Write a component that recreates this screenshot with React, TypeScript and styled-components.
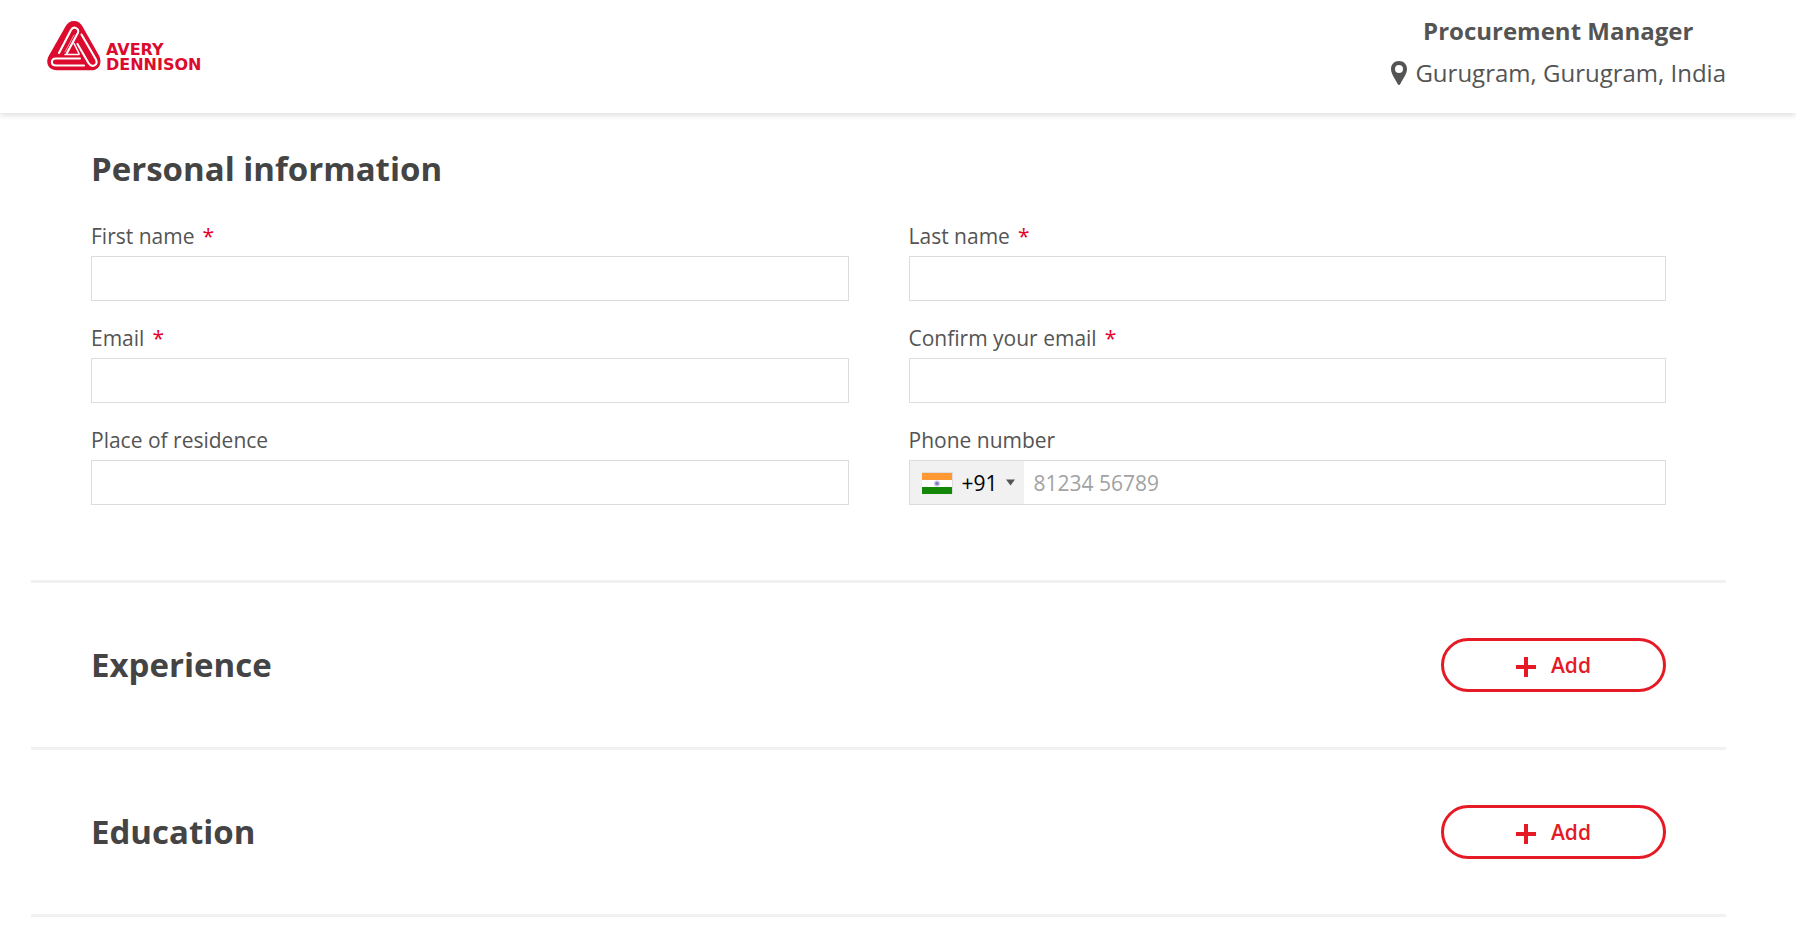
import React, { useId } from "react";
import styled, { createGlobalStyle } from "styled-components";

const GlobalStyle = createGlobalStyle`
  *, *::before, *::after { box-sizing: border-box; }
  body {
    margin: 0;
    background: #fff;
    color: #545454;
    font-family: "Open Sans", "Noto Sans", sans-serif;
    font-size: 21px;
    line-height: 28px;
  }
  button, input, select { font: inherit; }
`;

const Header = styled.header`
  display: flex;
  align-items: flex-start;
  justify-content: space-between;
  height: 113px;
  padding: 10px 70px 0 47px;
  background: #fff;
  box-shadow: 0 3px 5px rgba(0, 0, 0, 0.11);
`;

const LogoLink = styled.a`
  display: flex;
  gap: 5px;
  padding-top: 11px;
  color: #dc0a2d;
  text-decoration: none;
  svg { display: block; }
`;

const Wordmark = styled.span`
  display: flex;
  flex-direction: column;
  padding-top: 21px;
  font-family: "DejaVu Sans", sans-serif;
  font-size: 16px;
  line-height: 15px;
  font-weight: 700;
`;

const JobSummary = styled.div`
  display: flex;
  flex-direction: column;
  align-items: center;
  font-size: 24px;
  line-height: 42px;
`;

const JobTitle = styled.h1`
  margin: 0;
  font-size: inherit;
  font-weight: 700;
`;

const JobLocation = styled.div`
  display: flex;
  align-items: center;
  gap: 7px;
`;

const Main = styled.main`
  margin: 0 70px 0 31px;
`;

const Section = styled.section`
  border-bottom: 3px solid #f1f1f1;
  padding: 32px 60px 75px;
`;

const CollapsedSection = styled(Section)`
  display: flex;
  align-items: center;
  justify-content: space-between;
  padding: 55px 60px;
`;

const SectionTitle = styled.h2`
  margin: 0;
  color: #444;
  font-size: 33px;
  line-height: 48px;
  font-weight: 700;
`;

const FieldGrid = styled.div`
  display: grid;
  grid-template-columns: 1fr 1fr;
  gap: 23px 60px;
  margin-top: 29px;
`;

const FieldLabel = styled.label`
  display: block;
  width: fit-content;
  margin-bottom: 6px;
`;

const Required = styled.span`
  margin-left: 8px;
  color: #e4002b;
`;

const TextInput = styled.input`
  display: block;
  width: 100%;
  height: 45px;
  padding: 0 10px;
  border: 1px solid #dcdcdc;
  border-radius: 0;
  background: #fff;
  color: #222;
  outline: none;
`;

const PhoneBox = styled.div`
  display: flex;
  height: 45px;
  border: 1px solid #dcdcdc;
  background: #fff;
`;

const CountryPicker = styled.div`
  display: flex;
  align-items: center;
  flex: none;
  width: 114px;
  padding: 0 8px 0 12px;
  background: #f1f1f1;
`;

const DialCode = styled.select`
  width: 36px;
  height: 100%;
  margin: 0 8px 0 9px;
  padding: 0;
  border: 0;
  background: transparent;
  color: #000;
  appearance: none;
  outline: none;
`;

const PhoneInput = styled(TextInput)`
  flex: 1;
  min-width: 0;
  height: 100%;
  border: 0;
  &::placeholder { color: #a2a2a2; opacity: 1; }
`;

const AddButton = styled.button`
  display: flex;
  align-items: center;
  justify-content: center;
  gap: 15px;
  width: 225px;
  height: 54px;
  padding: 0;
  border: 3px solid #e51a24;
  border-radius: 27px;
  background: #fff;
  color: #e51a24;
  font-weight: 600;
  cursor: pointer;
`;

const LogoMark = () => (
  <svg width="54" height="50" viewBox="0 0 54 50" aria-hidden="true">
    <path
      d="M27 0C31 0 33.500 2 35.500 5.500L52 34.500C55.500 42 52.500 49.300 44 49.300H10C1.500 49.300 -2 42 1.700 35L18.500 5.500C20.500 2 23 0 27 0Z"
      fill="#dc0a2d"
    />
    <g fill="none" stroke="#fff" strokeWidth="2.100" strokeLinecap="round" strokeLinejoin="round">
      <path d="M12 32L24 9C26.500 4.500 33 7.500 30.800 12L20 32" />
      <path d="M18 31L27 14" strokeWidth="1" strokeOpacity="0.6" />
      <path d="M32 32.500L27 22.500" strokeWidth="1.500" />
      <path d="M33 37.500H9C3.500 37.500 3.500 44.500 9 44.500H37" />
      <path d="M18 33.500H32" strokeWidth="1.500" />
      <path d="M34.500 13.500L49 38.500C51.500 44 45 47.500 41.500 42L30.500 23" />
    </g>
  </svg>
);

const PinIcon = () => (
  <svg width="18" height="24" viewBox="0 0 18 24" aria-hidden="true">
    <path
      fillRule="evenodd"
      fill="#545454"
      d="M9 0C13.700 0 17 3.500 17 8C17 13 12.500 18.500 10.300 23C9.800 24.200 8.200 24.200 7.700 23C5.500 18.500 1 13 1 8C1 3.500 4.300 0 9 0ZM9 4A4 4 0 1 0 9 12A4 4 0 1 0 9 4Z"
    />
  </svg>
);

const IndiaFlag = () => (
  <svg width="31" height="22" viewBox="0 0 31 22" aria-hidden="true">
    <rect width="31" height="22" fill="#ddd" />
    <rect y="1" width="30" height="7" fill="#ff9933" />
    <rect y="8" width="30" height="7" fill="#fff" />
    <rect y="15" width="30" height="7" fill="#138808" />
    <circle cx="15" cy="11.500" r="3" fill="#c9c7ec" />
    <circle cx="15" cy="11.500" r="1.700" fill="#7f7acb" />
  </svg>
);

const Caret = () => (
  <svg width="9" height="7" viewBox="0 0 9 7" aria-hidden="true">
    <path d="M0 0.500H9L4.500 6.500Z" fill="#555" />
  </svg>
);

const PlusIcon = () => (
  <svg width="20" height="24" viewBox="0 0 20 24" aria-hidden="true">
    <path d="M8 4h4v8h8v4h-8v8h-4v-8H0v-4h8z" fill="currentColor" />
  </svg>
);

type FieldProps = { label: string; type?: string; required?: boolean };

const Field = ({ label, type = "text", required }: FieldProps) => {
  const id = useId();
  return (
    <div>
      <FieldLabel htmlFor={id}>
        {label}
        {required && <Required>*</Required>}
      </FieldLabel>
      <TextInput id={id} type={type} required={required} />
    </div>
  );
};

const PhoneField = () => {
  const id = useId();
  return (
    <div>
      <FieldLabel htmlFor={id}>Phone number</FieldLabel>
      <PhoneBox>
        <CountryPicker>
          <IndiaFlag />
          <DialCode aria-label="Country code" defaultValue="+91">
            <option>+91</option>
          </DialCode>
          <Caret />
        </CountryPicker>
        <PhoneInput id={id} type="tel" placeholder="81234 56789" />
      </PhoneBox>
    </div>
  );
};

const ExpandableSection = ({ title }: { title: string }) => (
  <CollapsedSection>
    <SectionTitle>{title}</SectionTitle>
    <AddButton type="button">
      <PlusIcon />
      Add
    </AddButton>
  </CollapsedSection>
);

export default function App() {
  return (
    <>
      <GlobalStyle />
      <Header>
        <LogoLink href="#">
          <LogoMark />
          <Wordmark>
            <span>AVERY</span>
            <span>DENNISON</span>
          </Wordmark>
        </LogoLink>
        <JobSummary>
          <JobTitle>Procurement Manager</JobTitle>
          <JobLocation>
            <PinIcon />
            Gurugram, Gurugram, India
          </JobLocation>
        </JobSummary>
      </Header>
      <Main>
        <Section>
          <SectionTitle>Personal information</SectionTitle>
          <FieldGrid>
            <Field label="First name" required />
            <Field label="Last name" required />
            <Field label="Email" type="email" required />
            <Field label="Confirm your email" type="email" required />
            <Field label="Place of residence" />
            <PhoneField />
          </FieldGrid>
        </Section>
        <ExpandableSection title="Experience" />
        <ExpandableSection title="Education" />
      </Main>
    </>
  );
}
